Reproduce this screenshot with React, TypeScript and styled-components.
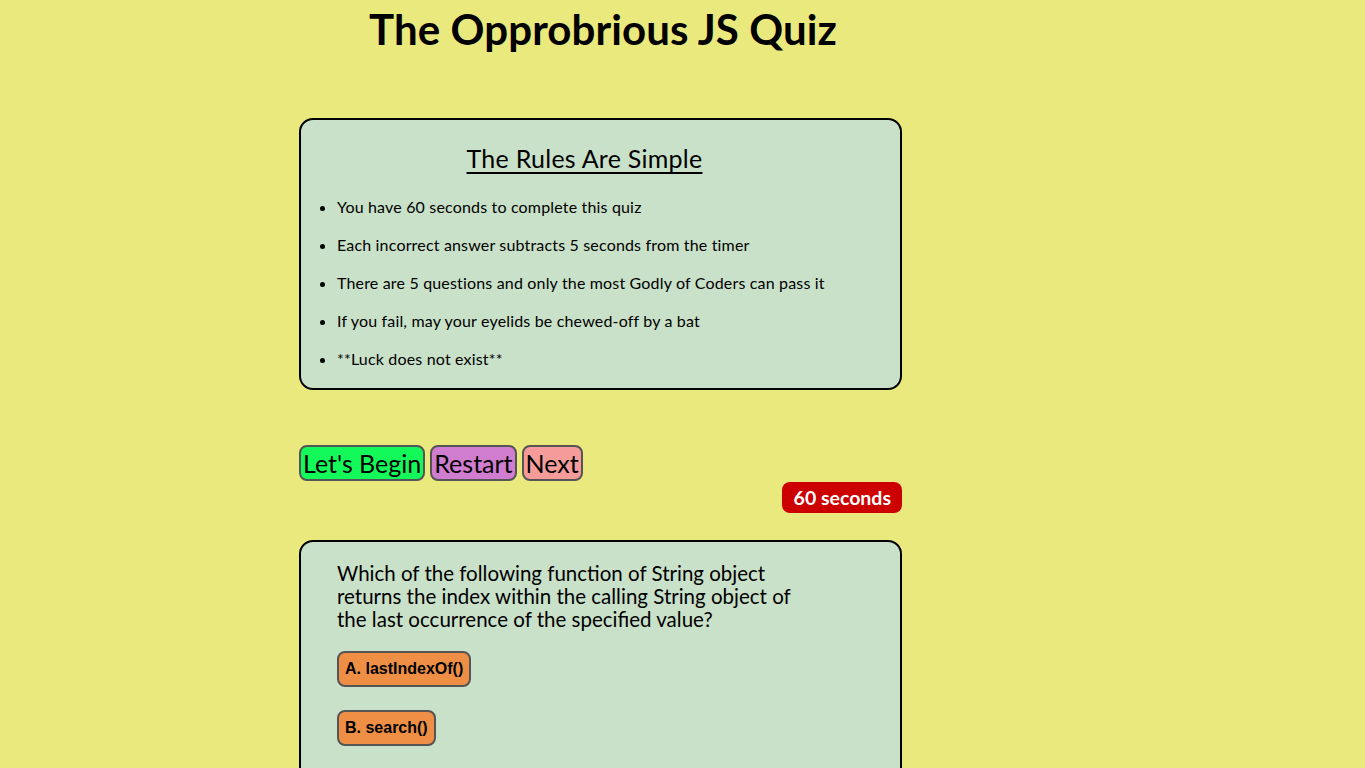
import React from "react";
import styled, { createGlobalStyle } from "styled-components";

const GlobalStyle = createGlobalStyle`
  html, body {
    margin: 0;
    padding: 0;
  }
  body {
    margin: 8px;
    background: #eae97d;
    font-family: "Lato", "DejaVu Sans", sans-serif;
    color: #000;
  }
`;

const Page = styled.main`
  width: 603px;
  margin-left: 291px;
  min-height: 4560px;
`;

const Title = styled.h1`
  margin: 0;
  font-size: 42px;
  line-height: 42px;
  font-weight: 700;
  letter-spacing: 0.1px;
  text-align: center;
  padding-left: 5px;
`;

const Card = styled.section<{ $top: number }>`
  margin-top: ${(p) => p.$top}px;
  background: #c9e0c9;
  border: 2px solid #000;
  border-radius: 14px;
`;

const RulesCard = styled(Card)`
  padding: 23px 32px 1px 0;
`;

const RulesTitle = styled.h2`
  margin: 0;
  font-size: 25px;
  line-height: 30px;
  font-weight: 400;
  letter-spacing: 0.25px;
  text-align: center;
  text-decoration: underline;
  text-decoration-thickness: 2px;
  text-underline-offset: 4px;
`;

const RuleList = styled.ul`
  margin: 24px 0 0;
  padding-left: 36px;
`;

const Rule = styled.li`
  font-size: 16px;
  line-height: 20px;
  letter-spacing: 0.17px;
  margin-bottom: 18px;
`;

const Controls = styled.div`
  margin-top: 55px;
  display: flex;
  gap: 5px;
`;

const ControlButton = styled.button<{ $bg: string }>`
  background: ${(p) => p.$bg};
  border: 2px solid #555;
  border-radius: 8px;
  font-family: inherit;
  font-size: 25px;
  line-height: 28px;
  padding: 2px 2px;
  color: #000;
  height: 36px;
`;

const TimerRow = styled.div`
  display: flex;
  justify-content: flex-end;
  margin-top: 1px;
`;

const Timer = styled.div`
  background: #cc0000;
  color: #fff;
  font-weight: 700;
  font-size: 19.5px;
  border-radius: 8px;
  height: 31px;
  line-height: 31px;
  padding: 0 11px 0 12px;
`;

const QuestionCard = styled(Card)`
  padding: 20px 36px 24px;
`;

const Question = styled.p`
  margin: 0;
  font-size: 20.5px;
  line-height: 23px;
  max-width: 478px;
`;

const Answers = styled.div`
  margin-top: 20px;
  display: flex;
  flex-direction: column;
  align-items: flex-start;
  gap: 23px;
`;

const AnswerButton = styled.button`
  background: #ef8f45;
  border: 2px solid #555;
  border-radius: 8px;
  font-family: "Liberation Sans", Arial, sans-serif;
  font-weight: 700;
  font-size: 16px;
  height: 36px;
  padding: 0 6px;
  color: #000;
`;

const rules = [
  "You have 60 seconds to complete this quiz",
  "Each incorrect answer subtracts 5 seconds from the timer",
  "There are 5 questions and only the most Godly of Coders can pass it",
  "If you fail, may your eyelids be chewed-off by a bat",
  "**Luck does not exist**",
];

const answers = ["A. lastIndexOf()", "B. search()", "C. substr()", "D. indexOf()"];

export default function App() {
  return (
    <>
      <GlobalStyle />
      <Page>
        <Title>The Opprobrious JS Quiz</Title>
        <RulesCard $top={68}>
          <RulesTitle>The Rules Are Simple</RulesTitle>
          <RuleList>
            {rules.map((r) => (
              <Rule key={r}>{r}</Rule>
            ))}
          </RuleList>
        </RulesCard>
        <Controls>
          <ControlButton $bg="#14f95a">Let's Begin</ControlButton>
          <ControlButton $bg="#d07ccf">Restart</ControlButton>
          <ControlButton $bg="#f59c9a">Next</ControlButton>
        </Controls>
        <TimerRow>
          <Timer>60 seconds</Timer>
        </TimerRow>
        <QuestionCard $top={27}>
          <Question>
            Which of the following function of String object returns the index within the calling
            String object of the last occurrence of the specified value?
          </Question>
          <Answers>
            {answers.map((a) => (
              <AnswerButton key={a}>{a}</AnswerButton>
            ))}
          </Answers>
        </QuestionCard>
      </Page>
    </>
  );
}
